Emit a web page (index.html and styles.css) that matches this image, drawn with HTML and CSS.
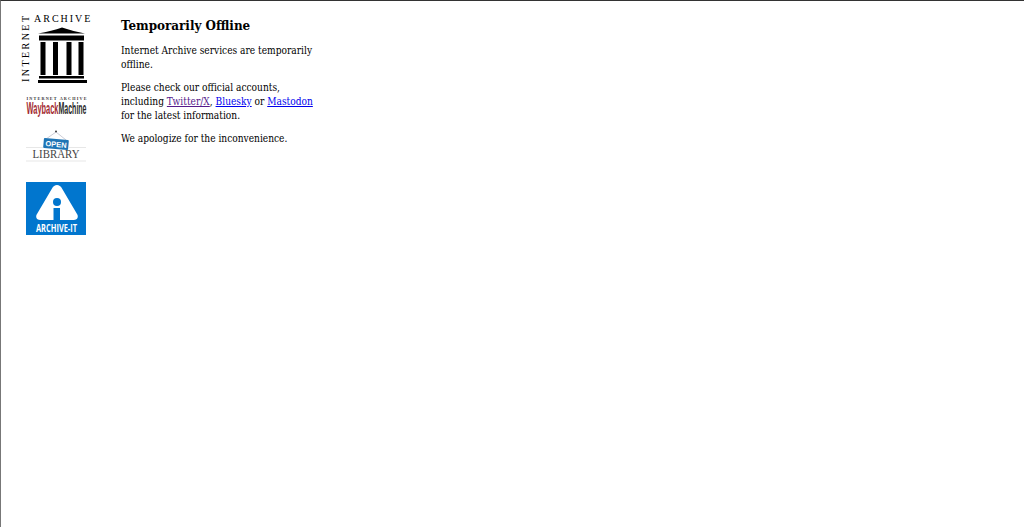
FILE: index.html
```html
<!DOCTYPE html>
<html>

<head>
    <title>Temporarily Offline</title>
    <link rel="stylesheet" href="styles.css">
</head>

<body>
    <div class="page">
        <div class="logos">
            <svg class="logo-ia" width="74" height="70" viewBox="0 0 74 70">
                <text class="ia-top" x="14" y="7">ARCHIVE</text>
                <text class="ia-side" transform="translate(9 67) rotate(-90)">INTERNET</text>
                <path d="M18 18.5 Q32 16 42 12.5 Q52 16 65 18.5 Z" />
                <rect x="19" y="20.5" width="45" height="5" />
                <rect x="20.5" y="27" width="5" height="33" />
                <rect x="33" y="27" width="5" height="33" />
                <rect x="46.5" y="27" width="5" height="33" />
                <rect x="58.5" y="27" width="5" height="33" />
                <rect x="19" y="61" width="45" height="2.5" />
                <rect x="18" y="65" width="49" height="3" />
            </svg>
            <svg class="logo-wb" width="61" height="24" viewBox="0 0 61 24">
                <text class="wb-top" x="30.5" y="4" textLength="60">INTERNET ARCHIVE</text>
                <text class="wb-way" x="0.5" y="18" textLength="32" lengthAdjust="spacingAndGlyphs">Wayback</text>
                <text class="wb-mach" x="32.5" y="18" textLength="28" lengthAdjust="spacingAndGlyphs">Machine</text>
            </svg>
            <svg class="logo-ol" width="60" height="32" viewBox="0 0 60 32">
                <circle cx="30" cy="1.5" r="1" fill="#333" />
                <path d="M30 2 L20 9 M30 2 L40 10" stroke="#aab" stroke-width="0.6" fill="none" />
                <rect x="17.5" y="9" width="25" height="10" rx="1" fill="#1f75b5" transform="rotate(5 30 14)" />
                <text class="ol-open" x="30" y="17" transform="rotate(5 30 14)">OPEN</text>
                <line x1="0" y1="17.5" x2="17" y2="17.5" stroke="#ddd" stroke-width="0.7" />
                <line x1="43" y1="17.5" x2="60" y2="17.5" stroke="#ddd" stroke-width="0.7" />
                <text class="ol-lib" x="30" y="28" textLength="47" lengthAdjust="spacingAndGlyphs">LIBRARY</text>
                <line x1="0" y1="31" x2="60" y2="31" stroke="#ddd" stroke-width="0.7" />
            </svg>
            <svg class="logo-ait" width="60" height="53" viewBox="0 0 60 53">
                <rect width="60" height="53" fill="#0176ce" />
                <path d="M31 3 C29 3 27 4.5 26 6.5 L11 32 C9 35 11 38 14 38 L27.5 38 L27.5 26 L34 26 L34 38 L48 38 C51 38 53 35 51 32 L36 6.5 C35 4.5 33 3 31 3 Z" fill="#fff" />
                <circle cx="31" cy="20" r="4" fill="#0176ce" />
                <text class="ait-label" x="30.5" y="49.5" textLength="41" lengthAdjust="spacingAndGlyphs">ARCHIVE-IT</text>
            </svg>
        </div>
        <div class="message">
            <h1>Temporarily Offline</h1>
            <p>Internet Archive services are temporarily offline.</p>
            <p>Please check our official accounts, including <a class="visited" href="#">Twitter/X</a>, <a href="#">Bluesky</a> or <a href="#">Mastodon</a> for the latest information.</p>
            <p>We apologize for the inconvenience.</p>
        </div>
    </div>
</body>

</html>
```

FILE: styles.css
```css
html, body {
    height: 100%;
}
body {
    margin: 0;
    box-sizing: border-box;
    border-top: 1px solid #333;
    border-left: 1px solid #777;
    font-family: "DejaVu Serif", serif;
    font-stretch: condensed;
    font-size: 10.1px;
    line-height: 13.7px;
    color: #000;
}
.page {
    display: flex;
}
.logos {
    width: 120px;
    flex: none;
    display: flex;
    flex-direction: column;
    align-items: flex-start;
    padding-top: 14px;
    padding-left: 19px;
    box-sizing: border-box;
    font-family: "Liberation Serif", serif;
    font-stretch: normal;
}
.logos svg {
    display: block;
    overflow: visible;
}
.logo-wb {
    margin: 11px 0 0 6px;
}
.logo-ol {
    margin: 10px 0 0 6px;
}
.logo-ait {
    margin: 20px 0 0 6px;
}
.ia-top {
    font-size: 10px;
    letter-spacing: 2px;
}
.ia-side {
    font-size: 10px;
    letter-spacing: 2.45px;
}
.wb-top {
    font-size: 4.2px;
    font-weight: bold;
    fill: #333;
    text-anchor: middle;
}
.wb-way {
    font-family: "Liberation Sans", sans-serif;
    font-size: 17px;
    font-weight: bold;
    fill: #a32b31;
}
.wb-mach {
    font-family: "Liberation Sans", sans-serif;
    font-size: 17px;
    font-weight: bold;
    fill: #2a2a2a;
}
.ol-open {
    font-family: "Liberation Sans", sans-serif;
    font-size: 7.5px;
    font-weight: bold;
    fill: #fff;
    text-anchor: middle;
}
.ol-lib {
    font-size: 13px;
    fill: #444;
    text-anchor: middle;
}
.ait-label {
    font-family: "Open Sans", sans-serif;
    font-size: 10px;
    font-weight: bold;
    fill: #fff;
    text-anchor: middle;
}
.message {
    width: 195px;
    padding-top: 16px;
}
h1 {
    font-size: 13.3px;
    line-height: 18px;
    margin: 0 0 9px;
}
p {
    margin: 0 0 9.9px;
}
a {
    color: #0000ee;
}
a.visited {
    color: #551a8b;
}
```
